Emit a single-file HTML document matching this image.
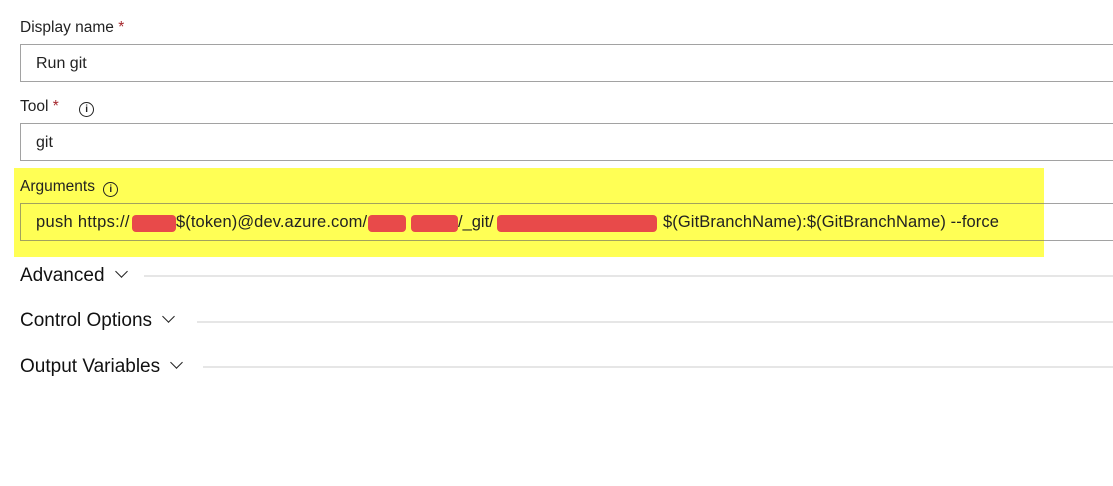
<!DOCTYPE html>
<html><head><style>
body{margin:0;width:1113px;height:486px;background:#fff;font-family:"Liberation Sans",sans-serif;color:#222;position:relative;overflow:hidden}
.a{position:absolute}
.lbl{font-size:15.5px;color:#222}
.star{color:#a4262c}
.inp{position:absolute;left:20px;right:-2px;border:1px solid rgba(100,100,100,.6);height:38px;box-sizing:border-box;font-size:16px;line-height:38px;padding-left:15px;white-space:nowrap}
.info{display:inline-block;width:13px;height:13px;border:1.3px solid #222;border-radius:50%;font-size:10px;line-height:13px;text-align:center;font-weight:bold;vertical-align:-1px}
.sec{position:absolute;left:20px;font-size:19px;color:#111}
.chev{display:inline-block;width:8px;height:8px;border-right:1.5px solid #222;border-bottom:1.5px solid #222;transform:rotate(45deg);margin-left:12px;vertical-align:5px}
.line{position:absolute;right:0;height:2px;background:#e6e6e6}
.red{position:absolute;background:#e84a4a;border-radius:4px;height:17px;top:215px}
.t{position:absolute;top:213px;font-size:16.5px;white-space:nowrap;color:#222}
</style></head><body>
<div class="a lbl" style="left:20px;top:19px">Display name <span class="star">*</span></div>
<div class="inp" style="top:44px">Run git</div>
<div class="a lbl" style="left:20px;top:98px">Tool <span class="star">*</span> <span class="info" style="margin-left:16px">i</span></div>
<div class="inp" style="top:123px">git</div>
<div class="a" style="left:14px;top:168px;width:1030px;height:89px;background:#ffff55"></div>
<div class="a lbl" style="left:20px;top:178px">Arguments <span class="info" style="margin-left:4px">i</span></div>
<div class="inp" style="top:203px"></div>
<div class="t" style="left:36px;letter-spacing:0.3px">push https://</div>
<div class="t" style="left:176px;letter-spacing:0.1px">$(token)@dev.azure.com/</div>
<div class="t" style="left:458px">/_git/</div>
<div class="t" style="left:663px;letter-spacing:0.1px">$(GitBranchName):$(GitBranchName) --force</div>
<div class="red" style="left:132px;width:44px"></div>
<div class="red" style="left:368px;width:38px"></div>
<div class="red" style="left:411px;width:47px"></div>
<div class="red" style="left:497px;width:160px"></div>
<div class="sec" style="top:265px">Advanced<span class="chev"></span></div>
<div class="line" style="left:144px;top:275px"></div>
<div class="sec" style="top:310px">Control Options<span class="chev"></span></div>
<div class="line" style="left:197px;top:321px"></div>
<div class="sec" style="top:356px">Output Variables<span class="chev"></span></div>
<div class="line" style="left:203px;top:366px"></div>
</body></html>
